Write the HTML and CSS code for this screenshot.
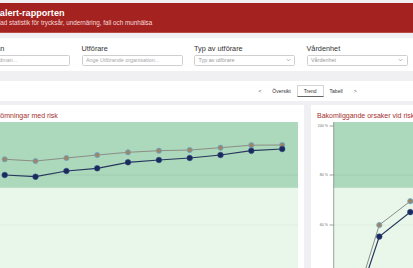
FILE: index.html
```html
<!DOCTYPE html>
<html lang="sv">
<head>
    <meta charset="UTF-8">
    <meta name="viewport" content="width=device-width, initial-scale=1.0">
    <title>Senior alert-rapporten</title>
    <link rel="stylesheet" href="styles.css">
</head>
<body>
    <div class="page">
        <header class="topbar">
            <div class="brand">
                <h1>Senior alert-rapporten</h1>
                <p>Samlad statistik för trycksår, undernäring, fall och munhälsa</p>
            </div>
        </header>

        <!-- filter -->
        <section class="filters">
            <div class="field">
                <label for="huvudman">Huvudman</label>
                <input type="text" id="huvudman" placeholder="Ange huvudman...">
            </div>
            <div class="field">
                <label for="utforare">Utförare</label>
                <input type="text" id="utforare" placeholder="Ange Utförande organisation...">
            </div>
            <div class="field">
                <label>Typ av utförare</label>
                <div class="select">Typ av utförare
                    <svg class="chevron" viewBox="0 0 6 4"><polyline points="1,1 3,3 5,1"/></svg>
                </div>
            </div>
            <div class="field">
                <label>Vårdenhet</label>
                <div class="select">Vårdenhet
                    <svg class="chevron" viewBox="0 0 6 4"><polyline points="1,1 3,3 5,1"/></svg>
                </div>
            </div>
        </section>

        <nav class="views">
            <span class="step">&lt;</span>
            <span class="view">Översikt</span>
            <span class="view active">Trend</span>
            <span class="view">Tabell</span>
            <span class="step">&gt;</span>
        </nav>

        <main class="charts">
            <div class="card">
                <div class="card-title">Riskbedömningar med risk</div>
                <svg class="plot" width="323" height="150">
                    <rect x="14.3" y="0" width="308.7" height="65.9" fill="#acd8bb"/>
                    <rect x="14.3" y="65.9" width="308.7" height="90" fill="#e8f7ea"/>
                    <line x1="14.3" y1="53" x2="323" y2="53" class="grid-dark"/>
                    <line x1="14.3" y1="103" x2="323" y2="103" class="grid-light"/>
                    <line x1="14.3" y1="0" x2="14.3" y2="150" class="axis"/>
                    <text x="8" y="4" class="tick">100 %</text>
                    <text x="8" y="53" class="tick">80 %</text>
                    <text x="8" y="103" class="tick">60 %</text>

                    <polyline class="line-gray" points="29.7,37.3 60.5,39 91.4,36 122.2,33 153,30.3 183.9,28.7 214.7,28 245.5,25.7 276.3,23.2 307.2,23"/>
                    <g class="dot-gray">
                        <circle cx="29.7" cy="37.3" r="2.6"/><circle cx="60.5" cy="39" r="2.6"/>
                        <circle cx="91.4" cy="36" r="2.6"/><circle cx="122.2" cy="33" r="2.6"/>
                        <circle cx="153" cy="30.3" r="2.6"/><circle cx="183.9" cy="28.7" r="2.6"/>
                        <circle cx="214.7" cy="28" r="2.6"/><circle cx="245.5" cy="25.7" r="2.6"/>
                        <circle cx="276.3" cy="23.2" r="2.6"/><circle cx="307.2" cy="23" r="2.6"/>
                    </g>

                    <polyline class="line-navy" points="29.7,53 60.5,54.7 91.4,49 122.2,46.3 153,40.3 183.9,38 214.7,36 245.5,33 276.3,28.7 307.2,27"/>
                    <g class="dot-navy">
                        <circle cx="29.7" cy="53" r="2.8"/><circle cx="60.5" cy="54.7" r="2.8"/>
                        <circle cx="91.4" cy="49" r="2.8"/><circle cx="122.2" cy="46.3" r="2.8"/>
                        <circle cx="153" cy="40.3" r="2.8"/><circle cx="183.9" cy="38" r="2.8"/>
                        <circle cx="214.7" cy="36" r="2.8"/><circle cx="245.5" cy="33" r="2.8"/>
                        <circle cx="276.3" cy="28.7" r="2.8"/><circle cx="307.2" cy="27" r="2.8"/>
                    </g>
                </svg>
            </div>

            <div class="card">
                <div class="card-title">Bakomliggande orsaker vid risk</div>
                <svg class="plot" width="323" height="150">
                    <rect x="16.7" y="0" width="306.3" height="65.9" fill="#acd8bb"/>
                    <rect x="16.7" y="65.9" width="306.3" height="90" fill="#e8f7ea"/>
                    <line x1="16.7" y1="53" x2="323" y2="53" class="grid-dark"/>
                    <line x1="16.7" y1="103" x2="323" y2="103" class="grid-light"/>
                    <line x1="16.7" y1="0" x2="16.7" y2="150" class="axis"/>
                    <line x1="12.5" y1="4" x2="16.7" y2="4" class="axis"/>
                    <line x1="12.5" y1="53" x2="16.7" y2="53" class="axis"/>
                    <line x1="12.5" y1="103" x2="16.7" y2="103" class="axis"/>
                    <text x="10.8" y="4" class="tick">100 %</text>
                    <text x="10.8" y="53" class="tick">80 %</text>
                    <text x="10.8" y="103" class="tick">60 %</text>

                    <polyline class="line-gray" points="31.5,202 62.3,103 93.3,79.2 124.1,73 154.9,68 185.7,65.9 216.5,63.4 247.3,60.9 278.1,58.5 308.9,56"/>
                    <g class="dot-gray">
                        <circle cx="31.5" cy="202" r="2.6"/><circle cx="62.3" cy="103" r="2.6"/>
                        <circle cx="93.3" cy="79.2" r="2.6"/><circle cx="124.1" cy="73" r="2.6"/>
                        <circle cx="154.9" cy="68" r="2.6"/><circle cx="185.7" cy="65.9" r="2.6"/>
                        <circle cx="216.5" cy="63.4" r="2.6"/><circle cx="247.3" cy="60.9" r="2.6"/>
                        <circle cx="278.1" cy="58.5" r="2.6"/><circle cx="308.9" cy="56" r="2.6"/>
                    </g>

                    <polyline class="line-navy" points="31.5,207 62.3,114.6 93.3,90.1 124.1,83 154.9,78 185.7,75.5 216.5,73 247.3,70.6 278.1,68 308.9,65.9"/>
                    <g class="dot-navy">
                        <circle cx="31.5" cy="207" r="2.8"/><circle cx="62.3" cy="114.6" r="2.8"/>
                        <circle cx="93.3" cy="90.1" r="2.8"/><circle cx="124.1" cy="83" r="2.8"/>
                        <circle cx="154.9" cy="78" r="2.8"/><circle cx="185.7" cy="75.5" r="2.8"/>
                        <circle cx="216.5" cy="73" r="2.8"/><circle cx="247.3" cy="70.6" r="2.8"/>
                        <circle cx="278.1" cy="68" r="2.8"/><circle cx="308.9" cy="65.9" r="2.8"/>
                    </g>
                </svg>
            </div>
        </main>
    </div>
</body>
</html>
```

FILE: styles.css
```css
body {
    margin: 0;
    background-color: #f0f0f3;
    font-family: 'Liberation Sans', Arial, sans-serif;
    color: #333;
    overflow: hidden;
}
.page {
    width: 701px;
    margin-left: -43px; /* sidan är scrollad något åt höger */
    padding-top: 3px;
}
.topbar {
    height: 29px;
    padding: 0 12px;
    display: flex;
    align-items: center;
    background-color: #a4221f;
    border-bottom: 1px solid #b94a47;
}
.brand h1 {
    margin: 0;
    font-size: 9.1px;
    line-height: 11px;
    color: #fff;
}
.brand p {
    margin: 0 0 0 17px;
    font-size: 6.3px;
    line-height: 8px;
    color: #f5dcdc;
}
.filters {
    margin-top: 5px;
    padding: 6px 12px 5.5px;
    display: flex;
    gap: 11.5px;
    background-color: #fff;
}
.field {
    width: 101px;
    display: flex;
    flex-direction: column;
}
.field label {
    font-size: 7.3px;
    line-height: 9px;
    color: #333;
}
input, .select {
    box-sizing: border-box;
    height: 11px;
    margin-top: 1.5px;
    padding: 0 3.5px;
    width: 100%;
    border: 1px solid #cfcfcf;
    border-radius: 1.5px;
    background-color: #fff;
    font-family: inherit;
    font-size: 5.4px;
    color: #999;
    outline: none;
}
input::placeholder {
    color: #a8a8a8;
}
.select {
    display: flex;
    align-items: center;
    justify-content: space-between;
    line-height: 9px;
}
.chevron {
    width: 5px;
    height: 4px;
    fill: none;
    stroke: #999;
    stroke-width: 0.9;
}
.views {
    margin-top: 10px;
    height: 20px;
    display: flex;
    align-items: center;
    justify-content: center;
    background-color: #fff;
    font-size: 5px;
    color: #333;
}
.step {
    padding: 0 6px;
    color: #555;
}
.view {
    padding: 0 5px;
}
.view.active {
    box-sizing: border-box;
    height: 12px;
    line-height: 10px;
    padding: 0 6px;
    margin: 0 1px;
    border: 1px solid #d4d4d4;
    border-bottom-color: #666;
}
.charts {
    margin-top: 4px;
    padding: 0 12px;
    display: grid;
    grid-template-columns: 1fr 1fr;
    gap: 7px;
}
.card {
    padding: 6px 6px 0;
    background-color: #fff;
    height: 170px;
}
.card-title {
    font-size: 7px;
    line-height: 9px;
    color: #a5302e;
    margin-bottom: 2px;
}
.plot {
    display: block;
    overflow: hidden;
}
.tick {
    font-size: 3.5px;
    fill: #666;
    text-anchor: end;
    dominant-baseline: middle;
}
.axis {
    stroke: #7a7a7a;
    stroke-width: 0.7;
}
.grid-dark {
    stroke: #9ccaab;
    stroke-width: 0.6;
}
.grid-light {
    stroke: #d3e8d5;
    stroke-width: 0.6;
}
.line-gray {
    fill: none;
    stroke: #8c8d86;
    stroke-width: 1;
}
.line-navy {
    fill: none;
    stroke: #27365f;
    stroke-width: 1.2;
}
.dot-gray circle {
    fill: #a2845f;
    stroke: #63a9d4;
    stroke-width: 0.8;
}
.dot-navy circle {
    fill: #1c2a5b;
    stroke: #2c4685;
    stroke-width: 0.6;
}
```
